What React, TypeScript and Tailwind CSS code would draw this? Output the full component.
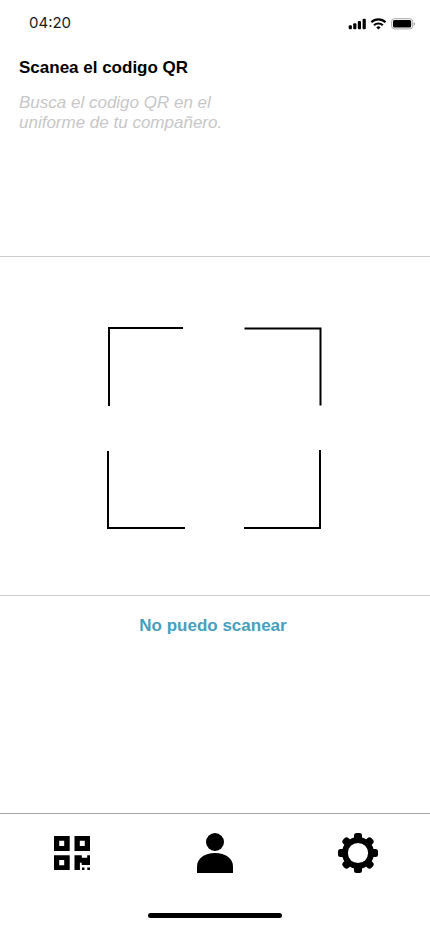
import React from "react";

function StatusIcons() {
  return (
    <svg width="68" height="14" viewBox="0 0 68 14" aria-hidden="true">
      <rect x="0.7" y="8.2" width="3.2" height="4" rx="1" />
      <rect x="5.2" y="6.2" width="3.2" height="6" rx="1" />
      <rect x="9.8" y="4" width="3.2" height="8.2" rx="1" />
      <rect x="14.6" y="1.8" width="3.2" height="10.4" rx="1" />
      <g fill="none" stroke="#000" strokeWidth="2.2">
        <path d="M23.3 5.3a10.3 10.3 0 0 1 14.2 0" />
        <path d="M26 8.3a6.3 6.3 0 0 1 8.8 0" />
      </g>
      <path d="M30.4 12.5 28.3 10.4a3 3 0 0 1 4.2 0Z" />
      <rect x="43.7" y="1.7" width="21" height="10.2" rx="2.8" fill="none" stroke="#a6a6a6" />
      <rect x="45" y="3" width="18.2" height="7.6" rx="1.6" />
      <path d="M65.8 5v4q1.2-.6 1.2-2t-1.2-2Z" fill="#999" />
    </svg>
  );
}

function ScanFrame() {
  return (
    <svg width="216" height="203" viewBox="0 0 216 203" fill="none" stroke="#000" strokeWidth="2" aria-hidden="true">
      <path d="M76 1H2v78" />
      <path d="M137.5 1.5h76v77" />
      <path d="M1 124v77h77" />
      <path d="M137 201h76v-78" />
    </svg>
  );
}

function QrIcon() {
  return (
    <svg width="36" height="34" viewBox="0 0 36 34" aria-hidden="true">
      <path
        fillRule="evenodd"
        d="M0 0h15.7v15H0ZM5.2 4.7v5.2h5V4.7ZM20.5 0H36v15H20.5ZM25.8 4.7v5.2h5V4.7ZM0 19.3h15.7V34H0ZM5.2 24v5.3h5V24Z"
      />
      <path d="M20.5 19.3h7.3v2.4h5.4v-2.4H36V29h-8.3v-2.2h-1.8V34h-5.4Z" />
      <path d="M28 31.5h2.5V34H28ZM33.3 31.5H36V34h-2.7Z" />
    </svg>
  );
}

function PersonIcon() {
  return (
    <svg width="36" height="40" viewBox="0 0 36 40" aria-hidden="true">
      <circle cx="18" cy="9" r="9" />
      <path d="M0 40v-6.5C0 25.5 7.5 20 18 20s18 5.5 18 13.5V40Z" />
    </svg>
  );
}

function GearIcon() {
  return (
    <svg width="40" height="40" viewBox="0 0 40 40" aria-hidden="true">
      <circle cx="20" cy="20" r="16" />
      <rect x="16" y="0" width="8" height="40" rx="2.5" />
      <rect x="0" y="16" width="40" height="8" rx="2.5" />
      <rect x="16.2" y="0" width="7.6" height="40" rx="3" transform="rotate(45 20 20)" />
      <rect x="16.2" y="0" width="7.6" height="40" rx="3" transform="rotate(135 20 20)" />
      <circle cx="20" cy="20" r="10.1" fill="#fff" />
    </svg>
  );
}

export default function App() {
  return (
    <div className="flex h-[932px] w-[430px] flex-col overflow-hidden bg-white font-['Liberation_Sans',Arial,sans-serif] text-black">
      <header className="flex h-[58px] shrink-0 items-start justify-between pl-[29px] pr-[14px]">
        <span className="mt-[13px] font-['Inter',sans-serif] text-[15px] leading-5 text-[#1a1a1a]">04:20</span>
        <span className="mt-[17px]">
          <StatusIcons />
        </span>
      </header>
      <section className="flex h-[199px] shrink-0 flex-col gap-[15px] border-b border-[#cccccc] pl-[19px]">
        <h1 className="text-[17px] font-bold leading-5">Scanea el codigo QR</h1>
        <p className="text-[17px] italic leading-5 text-[#c7c7c7]">
          Busca el codigo QR en el
          <br />
          uniforme de tu compañero.
        </p>
      </section>
      <main className="flex h-[339px] shrink-0 items-start justify-center border-b border-[#cccccc] pt-[70px]">
        <ScanFrame />
      </main>
      <div className="flex grow items-start justify-center pr-1 pt-5">
        <button className="text-[17px] font-bold leading-5 text-[#479fbf]">No puedo scanear</button>
      </div>
      <nav className="flex h-[119px] shrink-0 flex-col items-center justify-between border-t border-[#a6a6a6] pb-[14px] pt-[19px]">
        <div className="grid h-10 w-full grid-cols-3 items-center">
          <button className="flex justify-center" aria-label="QR">
            <QrIcon />
          </button>
          <button className="flex justify-center" aria-label="Perfil">
            <PersonIcon />
          </button>
          <button className="flex justify-center" aria-label="Ajustes">
            <GearIcon />
          </button>
        </div>
        <div className="h-[5px] w-[134px] rounded-full bg-black" />
      </nav>
    </div>
  );
}
